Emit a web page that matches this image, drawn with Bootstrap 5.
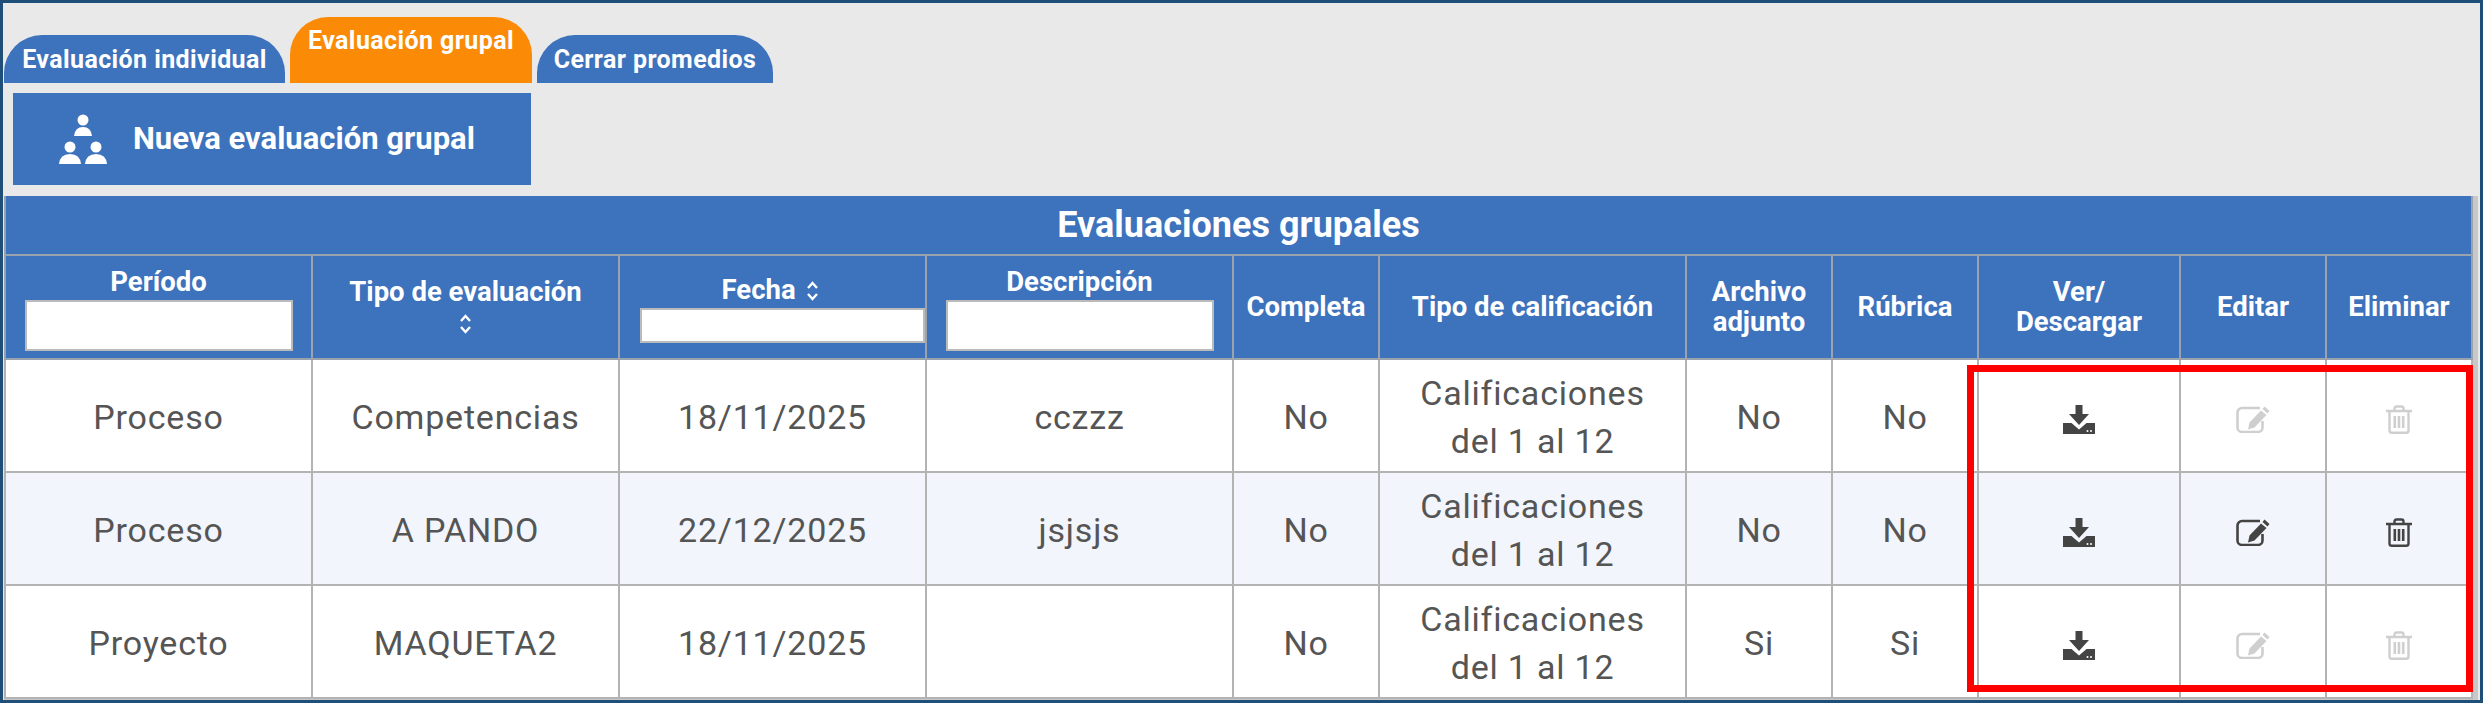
<!DOCTYPE html>
<html lang="es">

<head>
    <meta charset="UTF-8">
    <title>Evaluaciones grupales</title>
    <link href="https://cdn.jsdelivr.net/npm/bootstrap@5.3.3/dist/css/bootstrap.min.css" rel="stylesheet">
    <script src="https://cdn.jsdelivr.net/npm/bootstrap@5.3.3/dist/js/bootstrap.bundle.min.js"></script>
    <style>
        html, body { height: 703px; overflow: hidden; }
        body { background: #e9e9e9; font-family: "Roboto", "Liberation Sans", sans-serif; color: #555; }

        .screen-frame { height: 703px; border: 3px solid #1f4e79; overflow: hidden; }

        /* tabs */
        .tab-row { height: 80px; padding: 14px 0 0 1px; gap: 5px; }
        .eval-tab { height: 48px; width: 281px; background: #3d72bd; color: #fff; border-radius: 38px 38px 0 0; font-size: 25px; font-weight: 700; letter-spacing: .4px; text-decoration: none; padding-top: 10px; line-height: 30px; white-space: nowrap; }
        .eval-tab.tab-short { width: 236px; }
        .eval-tab.tab-on { height: 66px; width: 242px; background: #fb8a06; padding-top: 9px; }

        /* nueva evaluacion */
        .new-btn { width: 518px; height: 92px; margin: 10px 0 11px 10px; background: #3d72bd; border: 0; border-radius: 0; color: #fff; font-size: 31px; font-weight: 700; padding: 0 0 0 46px; gap: 26px; white-space: nowrap; }
        .new-btn:hover { background: #3d72bd; color: #fff; }
        .new-btn svg { width: 48px; height: 50px; fill: #fff; }

        /* table */
        .table-holder { margin-left: 1px; width: 2476px; height: 510px; padding-right: 9px; background: linear-gradient(to left, #e9e9e9 2px, #c8c8c8 2px); }
        .table.eval-table { table-layout: fixed; width: 2467px; margin: 0; border-collapse: collapse; --bs-table-border-color: #b3b3b3; }
        .table.eval-table th, .table.eval-table td { text-align: center; vertical-align: middle; padding: 0 2px; border: 2px solid #b3b3b3; }
        .table.eval-table th { background: #3d72bd; color: #fff; font-size: 27.500px; font-weight: 700; line-height: 30px; border-color: #9aa3ad; box-shadow: none; }
        .table.eval-table .title-row th { height: 59px; font-size: 36px; border-top: 0; }
        .table.eval-table .head-row th { height: 104px; }
        .table.eval-table td { height: 113px; font-size: 34px; line-height: 48px; color: #555; letter-spacing: .8px; background: #fff; box-shadow: none; padding-top: 2px; }
        .table.eval-table tr.alt-row td { background: #f2f5fb; }

        .w-307 { width: 307px; }
        .w-146 { width: 146px; }
        .w-202 { width: 202px; }

        .head-label { line-height: 36px; }
        .head-input { display: block; height: 51px; width: 268px; margin: 0 auto; padding: 0; border: 2px solid #bbb; border-radius: 0; }
        .table.eval-table th.date-cell { padding: 0 0 0 20px; overflow: hidden; }
        .date-input { height: 35px; width: 100%; margin: 0; }
        .sort-mark { width: 13px; height: 20px; fill: none; stroke: #fff; stroke-width: 2.4; }

        .icon-on { color: #444; }
        .icon-off { color: #cfcfcf; }
        .ico-dl { width: 32px; height: 29px; }
        .ico-ed { width: 34px; height: 27px; }
        .ico-tr { width: 26px; height: 29px; }

        .red-box { position: absolute; left: 1963px; top: 169px; width: 506px; height: 327px; border: 7px solid #fe0000; pointer-events: none; }
    </style>
</head>

<body>
    <svg width="0" height="0" class="d-block position-absolute">
        <symbol id="i-download" viewBox="0 0 32 29">
            <path fill="currentColor" d="M12.500 0h7v9h6.500L16 20 6 9h6.500z" />
            <path fill="currentColor" d="M0 18h8.500l7.500 6.500 7.500-6.500H32v11H0z" />
            <circle cx="24.500" cy="26" r="1" fill="#fff" />
            <circle cx="28" cy="26" r="1" fill="#fff" />
        </symbol>
        <symbol id="i-edit" viewBox="0 0 34 27">
            <path fill="none" stroke="currentColor" stroke-width="2.6" d="M24 2H6a4.500 4.500 0 0 0-4.500 4.500v15A4.500 4.500 0 0 0 6 26h16a4.500 4.500 0 0 0 4.500-4.500V15" />
            <path fill="currentColor" d="M28.500 .5l5 4.500L31.500 7.500l-5-4.500zM25 4.500l5.500 4.500-12 12.500-6.500 2 1.500-7z" />
        </symbol>
        <symbol id="i-trash" viewBox="0 0 26 29">
            <path fill="none" stroke="currentColor" stroke-width="2.4" d="M0 6h26M8.500 6V3.500Q8.500 1.500 10.500 1.500h5Q17.500 1.500 17.500 3.500V6M3.500 6v19.500q0 2.300 2.300 2.300h14.400q2.300 0 2.300-2.300V6" />
            <path fill="currentColor" d="M7.500 11h2.600v12H7.500zM11.700 11h2.600v12h-2.600zM15.900 11h2.600v12h-2.600z" />
        </symbol>
        <symbol id="i-sort" viewBox="0 0 13 20">
            <path d="M2 7l4.500-5L11 7M2 13l4.500 5L11 13" />
        </symbol>
    </svg>

    <div class="screen-frame">
        <!-- Tabs -->
        <div class="tab-row d-flex align-items-end">
            <a href="#" class="eval-tab text-center">Evaluación individual</a>
            <a href="#" class="eval-tab tab-on text-center">Evaluación grupal</a>
            <a href="#" class="eval-tab tab-short text-center">Cerrar promedios</a>
        </div>

        <!-- New evaluation -->
        <button type="button" class="btn new-btn d-flex align-items-center">
            <svg viewBox="0 0 48 50">
                <circle cx="24" cy="6" r="5.500" />
                <path d="M15 22q1-9 9-9t9 9z" />
                <circle cx="11" cy="33" r="5.500" />
                <path d="M0 50q1-10 11-10t11 10z" />
                <circle cx="37" cy="33" r="5.500" />
                <path d="M26 50q1-10 11-10t11 10z" />
            </svg>
            <span>Nueva evaluación grupal</span>
        </button>

        <!-- Table -->
        <div class="table-holder position-relative">
            <table class="table eval-table">
                <colgroup>
                    <col class="w-307"><col class="w-307"><col class="w-307"><col class="w-307">
                    <col class="w-146"><col class="w-307"><col class="w-146"><col class="w-146">
                    <col class="w-202"><col class="w-146"><col class="w-146">
                </colgroup>
                <thead>
                    <tr class="title-row">
                        <th colspan="11">Evaluaciones grupales</th>
                    </tr>
                    <tr class="head-row">
                        <th>
                            <div class="head-label">Período</div>
                            <input class="form-control head-input" type="text" aria-label="Período">
                        </th>
                        <th>Tipo de evaluación<br><svg class="sort-mark"><use href="#i-sort" /></svg></th>
                        <th class="date-cell">
                            <div class="head-label pe-4">Fecha <svg class="sort-mark ms-1"><use href="#i-sort" /></svg></div>
                            <input class="form-control head-input date-input" type="text" aria-label="Fecha">
                        </th>
                        <th>
                            <div class="head-label">Descripción</div>
                            <input class="form-control head-input" type="text" aria-label="Descripción">
                        </th>
                        <th>Completa</th>
                        <th>Tipo de calificación</th>
                        <th>Archivo adjunto</th>
                        <th>Rúbrica</th>
                        <th>Ver/<br>Descargar</th>
                        <th>Editar</th>
                        <th>Eliminar</th>
                    </tr>
                </thead>
                <tbody>
                    <tr>
                        <td>Proceso</td>
                        <td>Competencias</td>
                        <td>18/11/2025</td>
                        <td>cczzz</td>
                        <td>No</td>
                        <td>Calificaciones<br>del 1 al 12</td>
                        <td>No</td>
                        <td>No</td>
                        <td><svg class="ico-dl icon-on"><use href="#i-download" /></svg></td>
                        <td><svg class="ico-ed icon-off"><use href="#i-edit" /></svg></td>
                        <td><svg class="ico-tr icon-off"><use href="#i-trash" /></svg></td>
                    </tr>
                    <tr class="alt-row">
                        <td>Proceso</td>
                        <td>A PANDO</td>
                        <td>22/12/2025</td>
                        <td>jsjsjs</td>
                        <td>No</td>
                        <td>Calificaciones<br>del 1 al 12</td>
                        <td>No</td>
                        <td>No</td>
                        <td><svg class="ico-dl icon-on"><use href="#i-download" /></svg></td>
                        <td><svg class="ico-ed icon-on"><use href="#i-edit" /></svg></td>
                        <td><svg class="ico-tr icon-on"><use href="#i-trash" /></svg></td>
                    </tr>
                    <tr>
                        <td>Proyecto</td>
                        <td>MAQUETA2</td>
                        <td>18/11/2025</td>
                        <td></td>
                        <td>No</td>
                        <td>Calificaciones<br>del 1 al 12</td>
                        <td>Si</td>
                        <td>Si</td>
                        <td><svg class="ico-dl icon-on"><use href="#i-download" /></svg></td>
                        <td><svg class="ico-ed icon-off"><use href="#i-edit" /></svg></td>
                        <td><svg class="ico-tr icon-off"><use href="#i-trash" /></svg></td>
                    </tr>
                </tbody>
            </table>
            <div class="red-box"></div>
        </div>
    </div>
</body>

</html>
